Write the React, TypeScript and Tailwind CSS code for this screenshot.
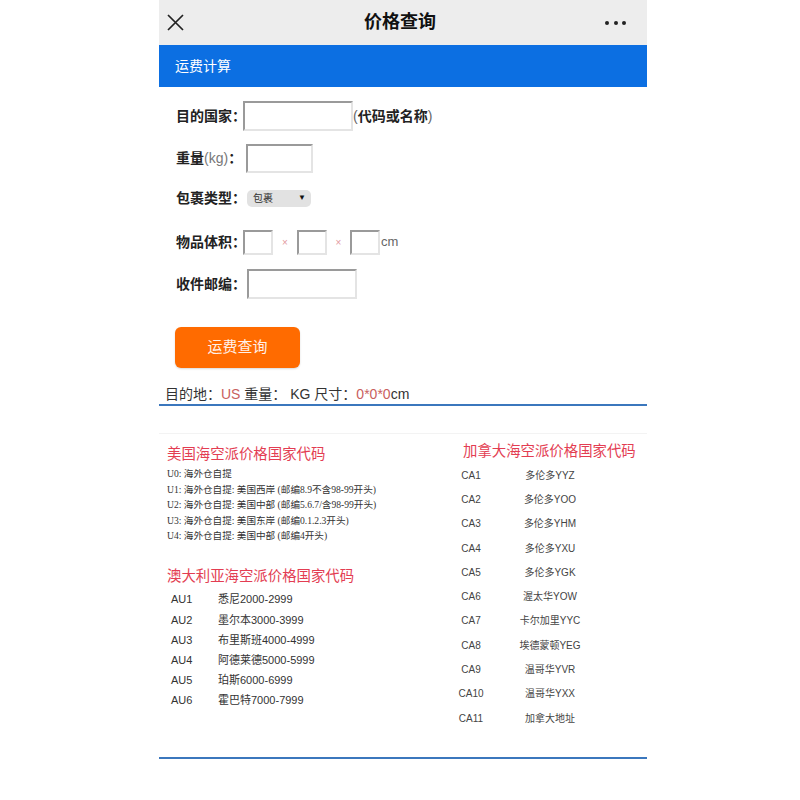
import React from 'react'

const usCodes = [
  'U0: 海外仓自提',
  'U1: 海外仓自提: 美国西岸 (邮编8.9不含98-99开头)',
  'U2: 海外仓自提: 美国中部 (邮编5.6.7/含98-99开头)',
  'U3: 海外仓自提: 美国东岸 (邮编0.1.2.3开头)',
  'U4: 海外仓自提: 美国中部 (邮编4开头)',
]

const auCodes = [
  ['AU1', '悉尼2000-2999'],
  ['AU2', '墨尔本3000-3999'],
  ['AU3', '布里斯班4000-4999'],
  ['AU4', '阿德莱德5000-5999'],
  ['AU5', '珀斯6000-6999'],
  ['AU6', '霍巴特7000-7999'],
]

const caCodes = [
  ['CA1', '多伦多YYZ'],
  ['CA2', '多伦多YOO'],
  ['CA3', '多伦多YHM'],
  ['CA4', '多伦多YXU'],
  ['CA5', '多伦多YGK'],
  ['CA6', '渥太华YOW'],
  ['CA7', '卡尔加里YYC'],
  ['CA8', '埃德蒙顿YEG'],
  ['CA9', '温哥华YVR'],
  ['CA10', '温哥华YXX'],
  ['CA11', '加拿大地址'],
]

// plain text box with the old inset look
function Box({ className }: { className: string }) {
  return (
    <div
      className={
        'relative bg-white border-2 border-t-[#9a9a9a] border-l-[#9a9a9a] border-r-[#e4e4e4] border-b-[#e4e4e4] ' +
        className
      }
    />
  )
}

function Label({ children }: { children: React.ReactNode }) {
  return (
    <span className="w-[67px] shrink-0 whitespace-nowrap font-bold text-[14px] text-[#222]">{children}</span>
  )
}

export default function App() {
  return (
    <div className="min-h-[800px] bg-white font-['Liberation_Sans','Noto_Sans_CJK_SC',sans-serif]">
      <div className="ml-[159px] w-[488px]">
        {/* top bar */}
        <div className="h-[45px] bg-[#ededed] grid grid-cols-[1fr_auto_1fr] items-center">
          <div className="pl-[8px]">
            <svg width="17" height="17" viewBox="0 0 17 17" fill="none" stroke="#222" strokeWidth="1.7">
              <path d="M1 1 16 16M16 1 1 16" />
            </svg>
          </div>
          <div className="font-bold text-[18px] text-[#111] pr-[6px]">价格查询</div>
          <div className="flex justify-end gap-[4.5px] pr-[21px]">
            <span className="w-[4px] h-[4px] rounded-full bg-[#222]" />
            <span className="w-[4px] h-[4px] rounded-full bg-[#222]" />
            <span className="w-[4px] h-[4px] rounded-full bg-[#222]" />
          </div>
        </div>

        {/* section bar */}
        <div className="h-[42px] bg-[#0c6fe2] flex items-center pl-[16px] text-white text-[14px]">运费计算</div>

        {/* form */}
        <div className="mt-[8px] pl-[17px]">
          <div className="h-[42px] flex items-center">
            <Label>目的国家：</Label>
            <Box className="w-[110px] h-[30px]" />
            <span className="font-bold text-[14px] text-[#222]">
              <span className="font-normal text-[#666]">(</span>代码或名称<span className="font-normal text-[#666]">)</span>
            </span>
          </div>
          <div className="h-[42px] flex items-center">
            <span className="w-[70px] shrink-0 whitespace-nowrap text-[14px] text-[#222]">
              <span className="font-bold">重量</span>
              <span className="text-[#777]">(kg)</span>
              <span className="font-bold">：</span>
            </span>
            <Box className="w-[67px] h-[29px]" />
          </div>
          <div className="h-[42px] flex items-center pb-[4px]">
            <Label>包裹类型：</Label>
            <div className="relative ml-[4px] w-[64px] h-[17px] bg-[#e2e2e2] rounded-[5px] flex items-center justify-between pl-[6px] pr-[5px] text-[10px] text-[#333]">
              <span>包裹</span>
              <span className="text-[8px] text-[#111]">▼</span>
            </div>
          </div>
          <div className="h-[42px] flex items-center">
            <Label>物品体积：</Label>
            <Box className="w-[30px] h-[25px]" />
            <span className="w-[24px] text-center text-[10px] text-[#e39aa0]">×</span>
            <Box className="w-[30px] h-[25px]" />
            <span className="w-[23px] text-center text-[10px] text-[#e39aa0]">×</span>
            <Box className="w-[30px] h-[25px]" />
            <span className="ml-[1px] text-[13px] text-[#666]">cm</span>
          </div>
          <div className="h-[42px] flex items-center">
            <Label>收件邮编：</Label>
            <Box className="ml-[4px] w-[110px] h-[30px]" />
          </div>
        </div>

        <button className="mt-[22px] ml-[16px] w-[125px] h-[41px] rounded-[6px] bg-[#ff6b00] text-[15px] text-[#fff1e8] shadow-[0_1px_2px_rgba(0,0,0,0.15)]">
          运费查询
        </button>

        {/* result line */}
        <div className="mt-[16px] pl-[6px] leading-[20px] text-[14px] text-[#333] border-b-2 border-[#3b77bd]">
          目的地：<span className="text-[#c9605e]">US</span> 重量： KG 尺寸：<span className="text-[#c9605e]">0*0*0</span>cm
        </div>
        <div className="h-[28px] border-b border-[#f3f3f3]" />

        {/* code tables */}
        <div className="h-[325px] flex border-b-2 border-[#3b77bd]">
          <div className="w-[296px] pl-[8px] pt-[10px]">
            <div className="leading-[20px] text-[14.4px] text-[#e33d52]">美国海空派价格国家代码</div>
            <div className="mt-[2px] font-['Liberation_Serif','Noto_Sans_CJK_SC',serif] text-[9.6px] leading-[15.5px] text-[#333]">
              {usCodes.map(t => (
                <div key={t}>{t}</div>
              ))}
            </div>
            <div className="mt-[22px] leading-[20px] text-[14.4px] text-[#e33d52]">澳大利亚海空派价格国家代码</div>
            <div className="mt-[4px] pl-[4px] text-[11px] text-[#333]">
              {auCodes.map(([c, v]) => (
                <div key={c} className="h-[20.2px] flex items-center">
                  <span className="w-[47px]">{c}</span>
                  <span>{v}</span>
                </div>
              ))}
            </div>
          </div>
          <div className="pt-[7px]">
            <div className="pl-[8px] leading-[20px] text-[14.4px] text-[#e33d52]">加拿大海空派价格国家代码</div>
            <div className="mt-[2px] text-[10px] text-[#444]">
              {caCodes.map(([c, v]) => (
                <div key={c} className="h-[24.3px] grid grid-cols-[32px_126px] items-center text-center">
                  <span>{c}</span>
                  <span>{v}</span>
                </div>
              ))}
            </div>
          </div>
        </div>
      </div>
    </div>
  )
}
